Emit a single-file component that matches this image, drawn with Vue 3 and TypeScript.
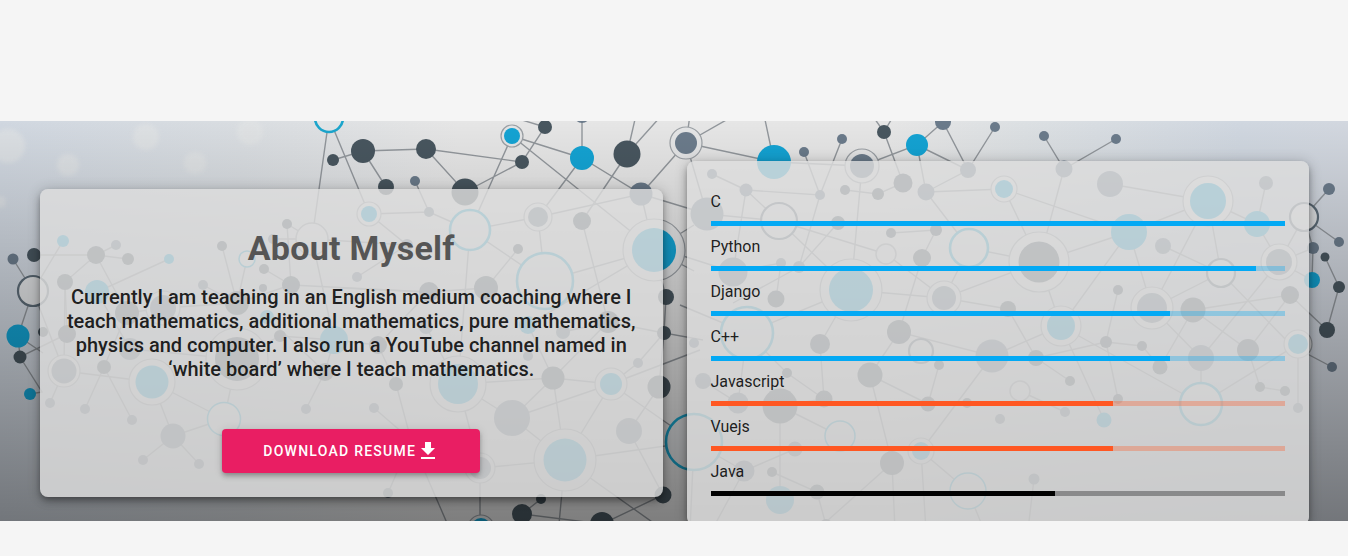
<script setup lang="ts">
type Kind = 'dark' | 'slate' | 'blue' | 'ring-blue' | 'ring-thin' | 'ring-slate' | 'ring-grey'
type Spot = [x: number, y: number, r: number, halo?: number]

interface Skill {
  id: string
  name: string
  value: number
  tone: 'sky' | 'orange' | 'black'
}

const skills: Skill[] = [
  { id: 'c', name: 'C', value: 100, tone: 'sky' },
  { id: 'python', name: 'Python', value: 95, tone: 'sky' },
  { id: 'django', name: 'Django', value: 80, tone: 'sky' },
  { id: 'cpp', name: 'C++', value: 80, tone: 'sky' },
  { id: 'javascript', name: 'Javascript', value: 70, tone: 'orange' },
  { id: 'vuejs', name: 'Vuejs', value: 70, tone: 'orange' },
  { id: 'java', name: 'Java', value: 60, tone: 'black' },
]

const spots: Record<Kind, Spot[]> = {
  dark: [
    [333, 160, 6], [96, 255, 9], [128, 259, 6], [65, 282, 8], [34, 255, 7],
    [222, 246, 5], [264, 269, 5], [287, 224, 5], [291, 285, 9], [263, 288, 4], [237, 303, 12],
    [127, 313, 12], [363, 151, 12], [426, 149, 10], [386, 187, 8], [465, 192, 13.5],
    [545, 127, 7], [522, 162, 7], [627, 154, 13.5], [582, 221, 9], [518, 249, 5],
    [486, 288, 12], [429, 292, 10], [666, 297, 8], [608, 322, 11], [884, 132, 7],
    [903, 183, 9.5], [878, 194, 6], [845, 190, 5], [838, 223, 7], [891, 233, 5],
    [936, 230, 6], [922, 258, 9], [776, 299, 8.5], [1008, 309, 8], [1039, 262, 20.5, 30],
    [1325, 257, 4.5], [1339, 287, 6], [1193, 310, 12.5], [1290, 295, 9], [20, 357, 6.5],
    [43, 332, 5], [67, 334, 9], [104, 367, 7], [237, 359, 22, 31], [280, 336, 6],
    [325, 372, 9], [378, 345, 9], [396, 384, 7], [553, 378, 11.5], [659, 387, 11.5],
    [541, 499, 5], [522, 514, 10], [602, 524, 12], [663, 495, 8.5], [664, 333, 7],
    [820, 344, 10], [899, 332, 12], [870, 375, 12.5], [939, 365, 5], [787, 373, 5],
    [824, 399, 8.5], [928, 404, 7.5], [967, 403, 5], [892, 463, 12], [772, 472, 5],
    [817, 492, 7.5], [826, 525, 6], [1036, 358, 8], [1106, 342, 6], [1142, 346, 5],
    [1160, 367, 7.5], [1248, 350, 11], [1260, 387, 5], [1285, 391, 5], [1070, 381, 5],
    [1118, 399, 5], [1327, 330, 8], [780, 406, 17.5], [1118, 290, 5],
  ],
  slate: [
    [13, 259, 5.5],
    [116, 245, 5], [273, 239, 5], [203, 285, 5], [163, 308, 13, 17], [415, 181, 5],
    [582, 115, 8], [641, 194, 11.5], [686, 143, 11, 16], [429, 212, 5], [538, 217, 10, 14],
    [357, 277, 5], [407, 245, 6], [804, 152, 5], [842, 139, 5], [862, 166, 12, 17],
    [943, 122, 8], [995, 127, 5], [968, 170, 8], [926, 192, 8.5], [820, 195, 5],
    [746, 190, 6.5], [712, 174, 5], [707, 214, 16.5], [733, 272, 14.5], [781, 263, 5],
    [799, 267, 6], [944, 298, 12, 17], [1044, 136, 5], [1116, 139, 5], [1064, 169, 8.5],
    [1110, 184, 13], [1266, 183, 7], [1163, 246, 8], [1279, 262, 13, 18], [1329, 189, 6],
    [1339, 242, 5], [1313, 248, 6], [1152, 308, 15, 21], [64, 371, 12.5, 16],
    [130, 349, 11], [50, 403, 5], [85, 409, 5], [132, 420, 5], [173, 436, 12.5],
    [306, 409, 5], [143, 460, 5], [199, 464, 5], [374, 408, 5], [512, 418, 18],
    [638, 363, 5], [629, 431, 13], [480, 468, 11, 15], [388, 493, 5], [563, 332, 7],
    [528, 356, 5], [426, 327, 7], [694, 343, 5], [992, 356, 16.5], [703, 381, 8],
    [738, 403, 10.5], [1000, 419, 5], [795, 449, 7.5], [744, 471, 10.5], [1201, 358, 13],
    [1065, 412, 5], [1034, 479, 5.5], [1298, 408, 5], [1332, 367, 5],
  ],
  blue: [
    [63, 241, 6], [169, 259, 5], [97, 292, 12], [267, 317, 7], [512, 136, 8, 11],
    [582, 158, 12], [369, 214, 8, 12], [654, 250, 22, 31], [774, 162, 17], [917, 145, 11],
    [1004, 189, 9, 13], [851, 290, 22, 31], [1208, 201, 18, 25], [1257, 224, 13],
    [1129, 232, 18], [1312, 280, 8], [1061, 326, 14, 20], [18, 336, 11.5], [30, 394, 6],
    [152, 382, 16.5, 23], [334, 340, 14], [458, 384, 20, 28], [611, 384, 11, 16],
    [565, 460, 21.5, 31], [481, 528, 10, 13], [528, 325, 9], [921, 451, 9, 13],
    [780, 500, 14], [1298, 344, 10, 14], [1104, 420, 7.5],
  ],
  'ring-blue': [
    [329, 118, 14], [470, 230, 20], [545, 281, 28], [969, 248, 19], [747, 333, 26],
    [694, 442, 28], [1201, 404, 21],
  ],
  'ring-thin': [[247, 259, 8], [224, 419, 16.5], [840, 436, 15], [968, 491, 18]],
  'ring-slate': [[33, 291, 15], [779, 221, 18], [1221, 273, 14], [921, 351, 12], [1304, 217, 14]],
  'ring-grey': [[312, 239, 16], [886, 254, 10], [1020, 391, 10]],
}

const kinds = Object.keys(spots) as Kind[]

const links: string[] = [
  // upper left
  'M329 118L312 239M329 118L369 214M333 160L363 151L426 149L522 162M363 151L386 187',
  'M426 149L465 192L522 162L545 127L522 120M512 136L470 230M512 136L582 158M512 136L654 250',
  'M582 115L582 158L538 217M582 158L641 194L686 143M627 154L582 221L608 322',
  'M627 154L636 115M627 154L662 115M415 181L429 212M369 214L429 212L470 230M369 214L407 245L357 277',
  'M470 230L538 217L641 194L654 250M470 230L545 281M538 217L545 281L654 250M470 230L458 384',
  'M518 249L486 288L429 292L340 288M312 239L287 224L291 285M312 239L273 239M312 239L407 245',
  'M312 239L334 340M264 269L291 285L429 292M222 246L237 303L247 259M203 285L237 303L291 285',
  'M13 259L33 291M34 255L96 255L128 259M33 291L18 336L20 357L67 334M18 336L43 353M20 357L42 392L30 394',
  'M63 241L33 291L64 371M116 245L96 255L65 282L67 334M96 255L127 313L163 308L237 303M169 259L97 292',
  'M65 282L64 371M127 313L104 367L85 409M104 367L132 420M64 371L152 382L173 436L143 460',
  'M173 436L199 464M152 382L224 419L173 436M64 371L50 403M97 292L130 349L237 359L224 419',
  'M237 359L280 336L334 340L378 345L429 292M334 340L325 372L306 409M267 317L325 372',
  // lower left
  'M378 345L396 384L411 440L450 530M374 408L411 440M426 327L458 384L553 378L611 384L638 363L664 333',
  'M458 384L512 418L565 460M458 384L480 468L565 460L694 442M553 378L512 418L611 384L565 460',
  'M553 378L565 460L559 524M611 384L694 442M611 384L700 350M659 387L629 431L663 495L602 524',
  'M565 460L655 524M541 499L522 514L602 524M388 493L411 440M480 468L480 528M528 325L553 378',
  'M563 332L608 322L553 378M654 250L694 271M654 250L694 225M654 250L666 297L664 333L703 340M654 250L528 325',
  'M641 194L707 214M659 387L664 333M664 333L608 322',
  // upper right
  'M686 143L690 115M686 143L735 115M686 143L774 162L862 166L917 145L943 122L968 170L995 127',
  'M774 162L764 115M804 152L820 195L746 190L712 174M842 139L820 195L799 267M884 132L872 115M884 132L894 115M884 132L903 183L878 194L845 190',
  'M917 145L968 170L926 192L1004 189L1039 262M917 145L926 192L969 248M862 166L851 290M707 214L686 143',
  'M707 214L779 221L746 190L733 272M779 221L838 223L799 267L733 303M779 221L886 254M779 221L851 290',
  'M891 233L936 230L922 258L899 332M886 254L944 298L1039 262M969 248L1039 262',
  'M969 248L944 298L1008 309M944 298L851 290L747 333M733 272L781 263L776 299M733 272L680 255',
  'M1044 136L1064 169L1116 139M1064 169L1039 262M1110 184L1208 201L1257 224L1266 183',
  'M1004 189L1129 232L1208 201L1221 273M1039 262L1129 232L1152 308L1221 273M1279 262L1304 217L1329 189',
  'M1163 246L1221 273L1290 344M1129 232L1061 326L1039 262M1208 201L1152 308M1193 310L1290 295L1327 330',
  'M1257 224L1279 262L1312 280L1313 248L1279 262M1304 217L1339 242M1325 257L1339 287L1327 330',
  'M1118 290L1106 342M1304 217L1313 248M1298 344L1300 350L1332 367M1279 262L1201 358M1152 308L1201 358L1201 404L1298 344L1298 408',
  // lower right
  'M747 333L680 305M747 333L738 403L703 381M747 333L787 373L824 399L780 406L738 403M820 344L824 399',
  'M851 290L820 344M870 375L899 332L992 356L1061 326M1036 358L1106 342L1142 346L1160 367L1193 310L1248 350L1260 387L1285 391',
  'M870 375L928 404L967 403M939 365L928 404M992 356L921 451M892 463L870 375M992 356L1036 358M1106 342L1118 399M1036 358L1070 381',
  'M1061 326L1104 420M1061 326L1201 404M780 406L780 500M744 471L694 442M780 406L840 436M795 449L744 471',
  'M772 472L817 492L826 525M892 463L895 530M892 463L817 530M921 451L926 530M921 451L968 491L984 530M1034 479L1028 530',
  'M694 442L690 530M744 471L712 530M1020 391L1065 412M1008 309L1036 358M1290 295L1248 350',
]
</script>

<template>
  <main class="page">
    <section class="hero">
      <svg class="network" viewBox="0 121 1348 400" preserveAspectRatio="xMidYMid slice" aria-hidden="true">
        <g class="bokeh">
          <circle cx="8" cy="146" r="17" />
          <circle cx="68" cy="165" r="11" />
          <circle cx="146" cy="137" r="13" />
          <circle cx="195" cy="163" r="11" />
          <circle cx="250" cy="132" r="13" />
          <circle cx="0" cy="202" r="6" />
        </g>
        <g class="links">
          <path v-for="(d, i) in links" :key="i" :d="d" />
        </g>
        <g v-for="kind in kinds" :key="kind" :class="kind">
          <template v-for="(s, i) in spots[kind]" :key="i">
            <circle v-if="s[3]" class="halo" :cx="s[0]" :cy="s[1]" :r="s[3]" />
            <circle class="spot" :cx="s[0]" :cy="s[1]" :r="s[2]" />
          </template>
        </g>
      </svg>
      <div class="shade"></div>

      <div class="columns">
        <article class="card about">
          <h1>About Myself</h1>
          <p>
            Currently I am teaching in an English medium coaching where I teach mathematics,
            additional mathematics, pure mathematics, physics and computer. I also run a YouTube
            channel named in ‘white board’ where I teach mathematics.
          </p>
          <button type="button" class="download">
            Download Resume
            <svg viewBox="0 0 24 24" aria-hidden="true">
              <path d="M19 9h-4V3H9v6H5l7 7 7-7zM5 18v2h14v-2H5z" />
            </svg>
          </button>
        </article>

        <article class="card skills">
          <div v-for="skill in skills" :key="skill.id" class="skill">
            <label :for="skill.id">{{ skill.name }}</label>
            <progress :id="skill.id" :class="skill.tone" :value="skill.value" max="100"></progress>
          </div>
        </article>
      </div>
    </section>
  </main>
</template>

<style>
body {
  margin: 0;
  background: #f5f5f5;
}
</style>

<style scoped>
.page {
  padding: 121px 0 35px;
  font-family: Roboto, "Liberation Sans", sans-serif;
  font-size: 16px;
  line-height: 24px;
  color: rgba(0, 0, 0, 0.87);
}

.hero {
  position: relative;
  overflow: hidden;
  padding-top: 40px;
  background:
    linear-gradient(90deg, #d0d7e0 0%, #d9dde1 18%, #e6e6e6 34%, #e6e6e6 66%, #dce0e3 76%, #d0d7e0 92%, #d2d7df 100%);
}

.network,
.shade {
  position: absolute;
  inset: 0;
  width: 100%;
  height: 100%;
}

.shade {
  background: linear-gradient(180deg, rgba(0, 0, 0, 0) 0%, rgba(0, 0, 0, 0.45) 100%);
}

.bokeh {
  fill: #e4e6e6;
  opacity: 0.55;
  filter: blur(2px);
}

.links {
  fill: none;
  stroke: #92979c;
  stroke-width: 1.4;
}

.halo {
  fill: #e4e5e6;
  stroke: #9a9fa4;
  stroke-width: 1.2;
}

.dark .spot {
  fill: #48565f;
}

.slate .spot {
  fill: #6b7b8b;
}

.blue .spot {
  fill: #14a3d3;
}

.ring-blue .spot,
.ring-thin .spot,
.ring-slate .spot,
.ring-grey .spot {
  fill: #e2e4e6;
  stroke: #1ba5cc;
  stroke-width: 2.6;
}

.ring-thin .spot {
  stroke-width: 1.5;
}

.ring-slate .spot {
  stroke: #5d6c78;
  stroke-width: 2.2;
}

.ring-grey .spot {
  stroke: #9a9fa4;
  stroke-width: 1.5;
}

.columns {
  position: relative;
  display: grid;
  grid-template-columns: 1fr 1fr;
  gap: 24px;
  align-items: center;
  padding: 0 39px 0 40px;
  margin-bottom: -4px;
}

.card {
  border-radius: 8px;
  background: rgba(221, 221, 221, 0.82);
  box-shadow:
    0 3px 5px -1px rgba(0, 0, 0, 0.24),
    0 5px 8px rgba(0, 0, 0, 0.18),
    0 1px 14px rgba(0, 0, 0, 0.2);
}

.about {
  display: flex;
  flex-direction: column;
  align-items: center;
  padding: 39px 24px 24px;
  text-align: center;
}

h1 {
  margin: 0 0 17px;
  font-size: 34px;
  font-weight: 700;
  line-height: 40px;
  letter-spacing: 0.0073529412em;
  color: #555;
}

p {
  margin: 0 0 48px;
  font-size: 20px;
  font-weight: 500;
  line-height: 24px;
}

.download {
  display: inline-flex;
  align-items: center;
  height: 44px;
  padding: 0 40px 0 41px;
  border: 0;
  border-radius: 4px;
  background: #e91e63;
  box-shadow:
    0 2px 4px -1px rgba(0, 0, 0, 0.2),
    0 4px 5px rgba(0, 0, 0, 0.14),
    0 1px 10px rgba(0, 0, 0, 0.12);
  color: #fff;
  font-family: inherit;
  font-size: 14px;
  font-weight: 500;
  letter-spacing: 0.0892857143em;
  text-transform: uppercase;
  cursor: pointer;
}

.download svg {
  width: 24px;
  height: 24px;
  fill: currentColor;
}

.skills {
  display: grid;
  gap: 9px;
  padding: 29px 24px;
}

.skill {
  display: grid;
  gap: 7px;
}

progress {
  display: block;
  width: 100%;
  height: 5px;
  border: 0;
  appearance: none;
  background: transparent;
}

progress::-webkit-progress-bar {
  background: color-mix(in srgb, var(--tone) 32%, transparent);
}

progress::-webkit-progress-value {
  background: var(--tone);
}

.sky {
  --tone: #03a9f4;
}

.orange {
  --tone: #ff5722;
}

.black {
  --tone: #000;
}
</style>
